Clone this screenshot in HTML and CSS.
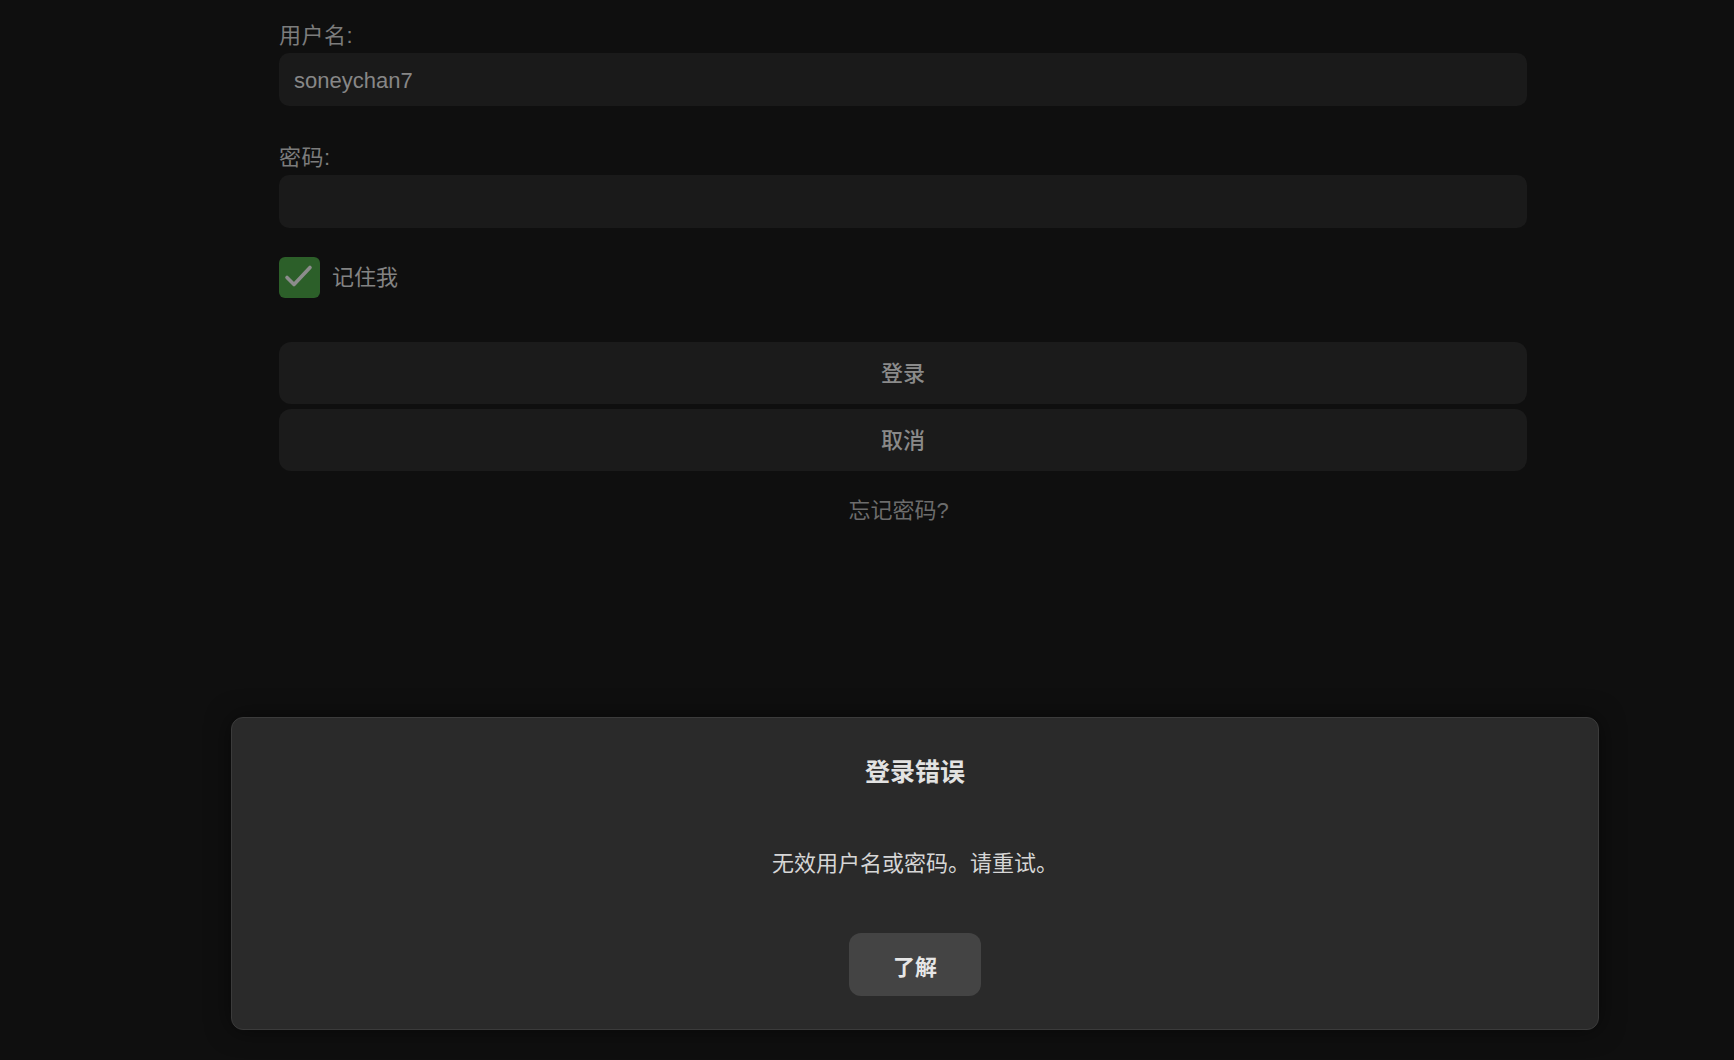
FILE: index.html
```html
<!DOCTYPE html>
<html lang="zh-CN">
<head>
<meta charset="utf-8">
<title>登录</title>
<link rel="stylesheet" href="styles.css">
</head>
<body>
<div class="page">
  <form class="login-form" onsubmit="return false">
    <label class="field-label">用户名:</label>
    <div class="field">soneychan7</div>
    <label class="field-label field-label-second">密码:</label>
    <div class="field"></div>
    <div class="remember">
      <span class="checkbox">
        <svg width="41" height="41" viewBox="0 0 41 41"><path d="M8 20.5 L15 27.5 L31 10.5" fill="none" stroke="#8c8c8c" stroke-width="3.6" stroke-linecap="round" stroke-linejoin="round"/></svg>
      </span>
      <span class="remember-text">记住我</span>
    </div>
    <div class="btn btn-first">登录</div>
    <div class="btn">取消</div>
    <div class="forgot">忘记密码?</div>
  </form>
</div>
<div class="dialog">
  <div class="dialog-title">登录错误</div>
  <div class="dialog-message">无效用户名或密码。请重试。</div>
  <div class="dialog-btn">了解</div>
</div>
</body>
</html>
```

FILE: styles.css
```css
html, body {
  margin: 0;
  padding: 0;
  background: #0f0f0f;
  width: 1734px;
  height: 1060px;
  overflow: hidden;
  font-family: "Liberation Sans", "Noto Sans CJK SC", sans-serif;
}

.page {
  padding: 21px 0 0 279px;
}

.login-form {
  width: 1248px;
  display: flex;
  flex-direction: column;
}

.field-label {
  display: block;
  font-size: 22px;
  line-height: 30px;
  height: 30px;
  color: #7c7c7c;
  margin-bottom: 2px;
  letter-spacing: 0.5px;
}

.field-label-second {
  margin-top: 37px;
}

.field {
  height: 53px;
  box-sizing: border-box;
  background: #1a1a1a;
  border-radius: 10px;
  padding: 3px 0 0 15px;
  font-size: 22px;
  line-height: 50px;
  color: #878787;
}

.remember {
  display: flex;
  align-items: center;
  margin-top: 29px;
  height: 41px;
  gap: 12px;
}

.checkbox {
  width: 41px;
  height: 41px;
  border-radius: 6px;
  background: #2c5f29;
  display: block;
}

.checkbox svg {
  display: block;
}

.remember-text {
  font-size: 22px;
  color: #838383;
  line-height: 30px;
}

.btn {
  height: 62px;
  box-sizing: border-box;
  padding-bottom: 4px;
  border-radius: 12px;
  background: #1b1b1b;
  display: flex;
  align-items: center;
  justify-content: center;
  font-size: 22px;
  font-weight: 500;
  color: #8a8a8a;
  margin-top: 5px;
}

.btn-first {
  margin-top: 44px;
}

.forgot {
  margin-top: 25px;
  text-align: center;
  font-size: 22px;
  line-height: 30px;
  color: #6c6c6c;
  padding-right: 9px;
}

.dialog {
  position: absolute;
  left: 231px;
  top: 717px;
  width: 1368px;
  height: 313px;
  box-sizing: border-box;
  background: #2a2a2a;
  border: 1px solid #3b3b3b;
  border-radius: 12px;
  box-shadow: 0 0 24px rgba(0, 0, 0, 0.5);
  display: flex;
  flex-direction: column;
  align-items: center;
  padding-top: 37px;
}

.dialog-title {
  font-size: 25px;
  font-weight: 700;
  line-height: 34px;
  color: #e2e2e2;
}

.dialog-message {
  margin-top: 60px;
  font-size: 22px;
  line-height: 30px;
  color: #d6d6d6;
}

.dialog-btn {
  margin-top: 54px;
  width: 132px;
  height: 63px;
  border-radius: 12px;
  background: #444444;
  display: flex;
  align-items: center;
  justify-content: center;
  font-size: 22px;
  font-weight: 700;
  color: #e6e6e6;
}
```
